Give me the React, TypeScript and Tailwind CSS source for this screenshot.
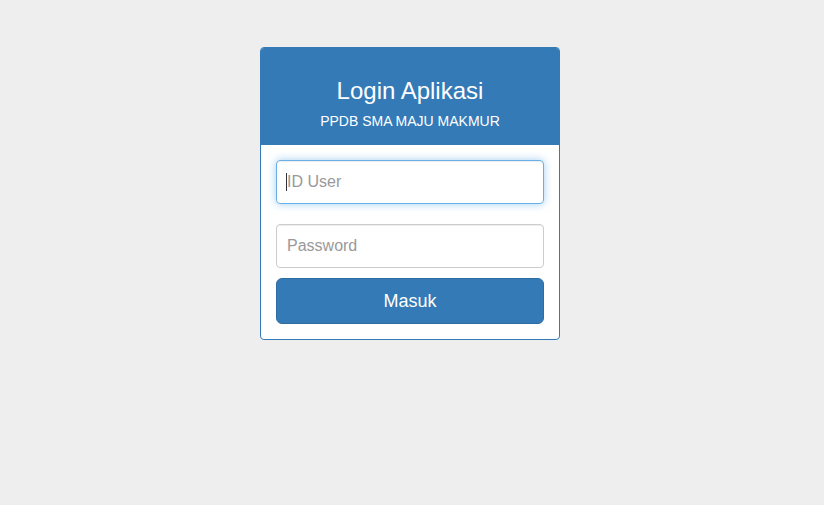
export default function App() {
  return (
    <div className="min-h-[505px] bg-[#eeeeee] pt-[47px] font-['Liberation_Sans',Arial,sans-serif]">
      <div className="ml-[260px] w-[300px] overflow-hidden rounded-[4px] border border-[#337ab7] bg-white">
        <div className="flex h-[97px] flex-col items-center bg-[#337ab7] pt-[29px] text-white">
          <h3 className="text-[24px] leading-[28px]">Login Aplikasi</h3>
          <p className="mt-[8px] text-[14px] leading-[16px]">PPDB SMA MAJU MAKMUR</p>
        </div>
        <form className="flex flex-col px-[15px] pt-[15px] pb-[15px]" onSubmit={(e) => e.preventDefault()}>
          <div className="relative">
            <input
              type="text"
              placeholder="ID User"
              className="h-[44px] w-full rounded-[4px] border border-[#66afe9] px-[10px] text-[16px] text-[#555] placeholder:text-[#999] outline-none shadow-[inset_0_1px_1px_rgba(0,0,0,0.075),0_0_8px_rgba(102,175,233,0.6)]"
            />
            {/* text caret */}
            <span className="absolute left-[10px] top-[13px] h-[18px] w-px bg-[#333]" />
          </div>
          <input
            type="password"
            placeholder="Password"
            className="mt-[20px] h-[44px] w-full rounded-[4px] border border-[#cccccc] px-[10px] text-[16px] text-[#555] placeholder:text-[#999] outline-none shadow-[inset_0_1px_1px_rgba(0,0,0,0.075)]"
          />
          <button
            type="submit"
            className="mt-[10px] h-[46px] w-full rounded-[6px] border border-[#2e6da4] bg-[#337ab7] text-[18px] text-white"
          >
            Masuk
          </button>
        </form>
      </div>
    </div>
  )
}
